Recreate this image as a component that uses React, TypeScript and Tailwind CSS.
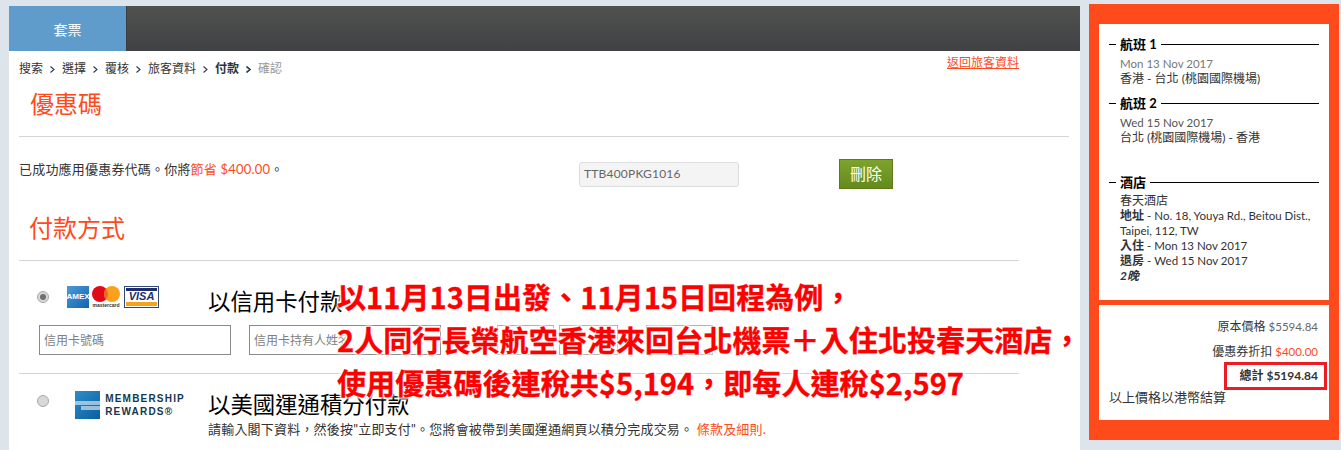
import React from "react";

const FONT = "font-['Lato','Noto_Sans_CJK_TC',sans-serif]";

function Crumb({ label, className = "" }: { label: string; className?: string }) {
  return <span className={className}>{label}</span>;
}

function Chevron({ bold }: { bold?: boolean }) {
  return (
    <svg width="5" height="7" viewBox="0 0 5 7" className="mx-[7px] mt-[1px] shrink-0">
      <path d="M0.5 0.5 L4 3.5 L0.5 6.5" fill="none" stroke="#2b3a4a" strokeWidth={bold ? 1.6 : 1.1} />
    </svg>
  );
}

function SideHeading({ title }: { title: string }) {
  return (
    <div className="flex items-center h-[15px]">
      <span className="w-[7px] h-px bg-black shrink-0" />
      <span className="mx-[4px] font-bold text-[13px] text-black whitespace-pre">{title}</span>
      <span className="flex-1 h-px bg-black" />
    </div>
  );
}

function Radio({ checked }: { checked?: boolean }) {
  return (
    <span className="w-[12px] h-[12px] rounded-full bg-[#d8d8d8] border border-[#a8a8a8] flex items-center justify-center shrink-0">
      {checked && <span className="w-[6px] h-[6px] rounded-full bg-[#707070]" />}
    </span>
  );
}

function CardLogos() {
  return (
    <div className="flex items-start w-[92px] shrink-0">
      <div className="w-[22px] h-[22px] bg-[linear-gradient(135deg,#4f9bd6,#0f65ad)] flex items-center justify-center text-[8px] font-bold text-white leading-none font-['Liberation_Sans',sans-serif] overflow-hidden">
        AMEX
      </div>
      <div className="ml-[3px] w-[28px] flex flex-col items-center">
        <svg width="28" height="16" viewBox="0 0 28 16">
          <circle cx="8" cy="8" r="8" fill="#e30a17" />
          <circle cx="20" cy="8" r="8" fill="#f9a11b" />
          <path d="M14 2.7 A8 8 0 0 1 14 13.3 A8 8 0 0 1 14 2.7 Z" fill="#f26522" />
        </svg>
        <span className="mt-[1px] text-[5px] leading-[5px] font-bold text-[#333] font-['Liberation_Sans',sans-serif]">mastercard</span>
      </div>
      <div className="ml-[4px] w-[35px] h-[22px] border border-[#33487a] bg-white flex flex-col">
        <span className="h-[3px] bg-[#1c2f6b] mx-px mt-px" />
        <span className="flex-1 flex items-center justify-center text-[11px] font-bold italic text-[#1c2f6b] leading-none font-['Liberation_Sans',sans-serif]">
          VISA
        </span>
        <span className="h-[5px] bg-[#f6a21d] mx-px mb-px" />
      </div>
    </div>
  );
}

function RewardsLogo() {
  return (
    <div className="flex items-center gap-[5px] w-[110px] shrink-0">
      <div className="w-[27px] h-[28px] bg-[linear-gradient(135deg,#2c8ccb,#0c5f9e)] flex flex-col items-center justify-center gap-[1px]">
        <span className="w-[25px] h-[4px] bg-[#cfe3f1] opacity-70" />
        <span className="w-[19px] h-[4px] ml-[5px] bg-[#cfe3f1] opacity-70" />
      </div>
      <div className="text-[10px] leading-[13px] font-bold tracking-[1.2px] text-[#17374f] font-['Liberation_Sans',sans-serif] whitespace-nowrap">
        <div>MEMBERSHIP</div>
        <div>REWARDS®</div>
      </div>
    </div>
  );
}

const App = () => {
  const inputClass =
    "h-[30px] border border-[#8a8a8a] bg-white px-[4px] text-[12px] outline-none placeholder:text-[#808080]";
  const latin = "text-[11.5px]";

  return (
    <div className={`relative flex h-[450px] w-[1341px] overflow-hidden bg-[#dde4ec] ${FONT} text-[12px] text-[#333]`}>
      <div className="ml-[9px] mt-[6px] w-[1071px] bg-white">
        <div className="flex h-[45px] bg-[linear-gradient(#50524f,#404144)]">
          <div className="flex w-[118px] items-center justify-center bg-[#5f9ccb] border-r border-[#3d3d3d] pt-[1px] text-[14px] text-white">
            套票
          </div>
        </div>

        <div className="flex h-[34px] items-start justify-between pl-[10px] pr-[61px]">
          <div className="flex items-center mt-[10px] h-[15px]">
            <Crumb label="搜索" />
            <Chevron />
            <Crumb label="選擇" />
            <Chevron />
            <Crumb label="覆核" />
            <Chevron />
            <Crumb label="旅客資料" />
            <Chevron />
            <Crumb label="付款" className="font-bold" />
            <Chevron bold />
            <Crumb label="確認" className="text-[#999]" />
          </div>
          <a className="mt-[4px] leading-[15px] text-[#ff4a1c] underline">返回旅客資料</a>
        </div>

        <div className="ml-[21px] h-[51px] text-[24px] leading-[38px] text-[#ff4a1c]">優惠碼</div>
        <div className="ml-[10px] mr-[11px] border-t border-[#d5d5d5]" />

        <div className="flex h-[74px] items-center pl-[10px]">
          <div className="w-[560px] -mt-[9px] text-[13px] tracking-[0.2px]">
            已成功應用優惠券代碼。你將<span className="text-[#ff4a1c]">節省 $400.00</span>。
          </div>
          <div className="flex h-[25px] w-[160px] items-center rounded-[3px] border border-[#ddd] bg-[#f4f4f4] px-[4px] text-[12px] tracking-[0.2px] text-[#666]">
            TTB400PKG1016
          </div>
          <button className="ml-[100px] h-[30px] w-[54px] border border-[#5c7a1a] bg-[linear-gradient(#7ea32b,#648a1e)] text-[16px] text-white">
            刪除
          </button>
        </div>

        <div className="ml-[20px] h-[49px] text-[24px] leading-[34px] text-[#ff4a1c]">付款方式</div>
        <div className="ml-[10px] w-[1000px] border-t border-[#d5d5d5]" />

        <div className="h-[112px] pl-[28px] pt-[25px]">
          <div className="flex items-start">
            <div className="mt-[5px]">
              <Radio checked />
            </div>
            <div className="ml-[18px]">
              <CardLogos />
            </div>
            <div className="ml-[49px] mt-[1px] text-[22.4px] leading-[30px] text-black">以信用卡付款</div>
          </div>
          <div className="mt-[8px] ml-[2px] flex items-center">
            <input className={`${inputClass} w-[192px]`} placeholder="信用卡號碼" readOnly />
            <input className={`${inputClass} ml-[18px] w-[192px]`} placeholder="信用卡持有人姓名" readOnly />
            <span className="ml-[56px] h-[30px] w-[57px] border border-[#b0b0b0]" />
            <span className="ml-[5px] h-[30px] w-[59px] border border-[#b0b0b0]" />
            <span className="ml-[28px] h-[30px] w-[67px] border border-[#b0b0b0]" />
          </div>
        </div>
        <div className="ml-[10px] w-[1000px] border-t border-[#d5d5d5]" />

        <div className="pl-[28px] pt-[17px]">
          <div className="flex items-start">
            <div className="mt-[4px]">
              <Radio />
            </div>
            <div className="ml-[26px]">
              <RewardsLogo />
            </div>
            <div className="ml-[23px] -mt-[1px]">
              <div className="text-[22.4px] leading-[30px] text-black">以美國運通積分付款</div>
              <div className="mt-[1px] whitespace-nowrap text-[13px] leading-[17px] tracking-[0.2px]">
                請輸入閣下資料，然後按"立即支付"。您將會被帶到美國運通網頁以積分完成交易。 <span className="text-[#ff4a1c]">條款及細則.</span>
              </div>
            </div>
          </div>
        </div>
      </div>

      <div className="ml-[9px] mt-[4px] flex h-[436px] w-[250px] flex-col gap-[5px] bg-[#ff4a1c] px-[10px] pt-[20px]">
        <div className="h-[276px] bg-white px-[10px] pt-[13px] leading-[15px]">
          <SideHeading title="航班 1" />
          <div className="pl-[11px] mt-[4px]">
            <div className={`${latin} text-[#777]`}>Mon 13 Nov 2017</div>
            <div>香港 - 台北 (桃園國際機場)</div>
          </div>
          <div className="mt-[10px]">
            <SideHeading title="航班 2" />
          </div>
          <div className="pl-[11px] mt-[4px]">
            <div className={`${latin} text-[#555]`}>Wed 15 Nov 2017</div>
            <div>台北 (桃園國際機場) - 香港</div>
          </div>
          <div className="mt-[30px]">
            <SideHeading title="酒店" />
          </div>
          <div className="pl-[11px] mt-[3px]">
            <div>春天酒店</div>
            <div>
              <b>地址</b> <span className={latin}>- No. 18, Youya Rd., Beitou Dist.,</span>
            </div>
            <div className={latin}>Taipei, 112, TW</div>
            <div>
              <b>入住</b> <span className={latin}>- Mon 13 Nov 2017</span>
            </div>
            <div>
              <b>退房</b> <span className={latin}>- Wed 15 Nov 2017</span>
            </div>
            <div className="font-bold italic">2晚</div>
          </div>
        </div>

        <div className="h-[115px] bg-white pl-[10px] pt-[14px]">
          <div className="pr-[11px] text-right leading-[15px]">
            原本價格 <span className={`${latin} text-[#666]`}>$5594.84</span>
          </div>
          <div className="mt-[10px] pr-[11px] text-right leading-[15px]">
            優惠券折扣 <span className={`${latin} text-[#ff4a1c]`}>$400.00</span>
          </div>
          <div className="ml-[115px] mt-[3px] flex h-[28px] w-[103px] items-center justify-end border-[3px] border-[#ed1c24] pr-[6px] font-bold">
            總計 $5194.84
          </div>
          <div className="text-[13px] leading-[15px]">以上價格以港幣結算</div>
        </div>
      </div>

      <div className="absolute left-[337px] top-[275px] whitespace-nowrap font-['Noto_Sans_CJK_TC',sans-serif] text-[29.1px] font-bold leading-[43px] text-[#ff0000] [-webkit-text-stroke:0.3px_#ff0000] [text-shadow:0_0_2px_#fff,0_0_2px_#fff,0_0_3px_#fff,0_0_3px_#fff,0_0_4px_#fff,0_0_4px_#fff]">
        <div>以11月13日出發、11月15日回程為例，</div>
        <div>2人同行長榮航空香港來回台北機票＋入住北投春天酒店，</div>
        <div>使用優惠碼後連稅共$5,194，即每人連稅$2,597</div>
      </div>
    </div>
  );
};

export default App;
